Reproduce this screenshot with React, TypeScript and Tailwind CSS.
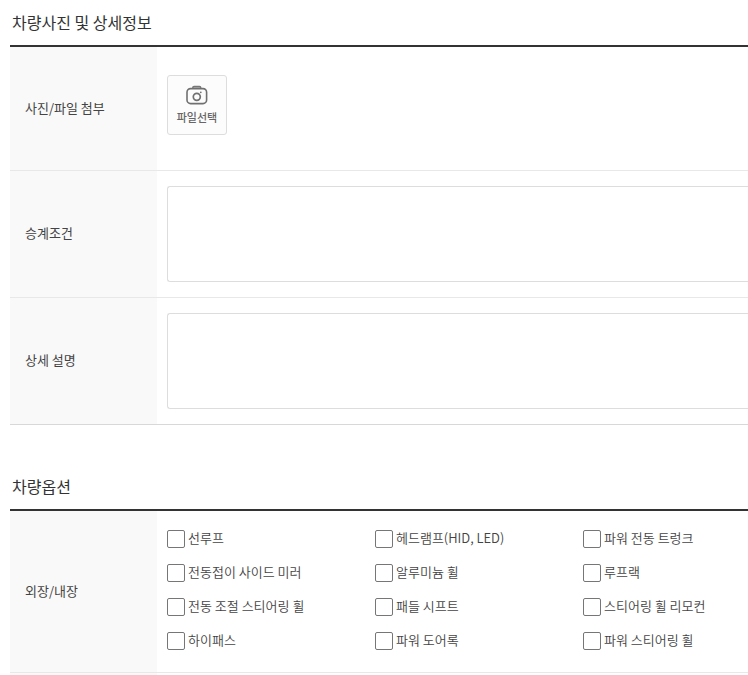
import type { ReactNode } from 'react';

const options = [
    '선루프',
    '헤드램프(HID, LED)',
    '파워 전동 트렁크',
    '전동접이 사이드 미러',
    '알루미늄 휠',
    '루프랙',
    '전동 조절 스티어링 휠',
    '패들 시프트',
    '스티어링 휠 리모컨',
    '하이패스',
    '파워 도어록',
    '파워 스티어링 휠',
];

function CameraIcon() {
    return (
        <svg width="22" height="20" viewBox="0 0 22 20" fill="none" aria-hidden="true">
            <path d="M6.8 3.4V2.6c0-.8.5-1.3 1.3-1.3h5.4c.8 0 1.3.5 1.3 1.3v.8z" fill="#bbb" stroke="#777" strokeWidth="1.3" />
            <rect x="1" y="3.6" width="19.6" height="15" rx="3.6" fill="#fcfcfc" stroke="#707070" strokeWidth="1.6" />
            <circle cx="10.8" cy="11.8" r="3.5" stroke="#707070" strokeWidth="1.7" />
            <circle cx="14.8" cy="7.3" r="0.9" fill="#707070" />
        </svg>
    );
}

function SectionTitle({ children }: { children: ReactNode }) {
    return (
        <h2 className="flex h-[47px] items-center border-b-2 border-[#333] pb-[2px] pl-[2px] text-base font-normal text-[#333]">
            {children}
        </h2>
    );
}

function Row({ label, children }: { label: ReactNode; children: ReactNode }) {
    return (
        <div className="flex border-b border-[#e8e8e8] last:border-[#d8d8d8]">
            <div className="flex w-[147px] shrink-0 items-center bg-[#f9f9f9] pb-[2px] pl-[15px] text-[#444]">{label}</div>
            <div className="min-w-0 flex-1 pl-[10px]">{children}</div>
        </div>
    );
}

export default function App() {
    return (
        <form className="overflow-hidden bg-white pl-[10px] font-['Noto_Sans_CJK_KR',sans-serif] text-[13px]">
            <section>
                <SectionTitle>차량사진 및 상세정보</SectionTitle>
                <div>
                    <Row label={<span id="photo-label">사진/파일 첨부</span>}>
                        <div className="pt-7 pb-[35px]">
                            <button
                                type="button"
                                aria-describedby="photo-label"
                                className="flex h-[60px] w-[60px] flex-col items-center rounded-[3px] border border-[#ddd] bg-[#fcfcfc] pt-[9px] text-[11px] leading-6 font-medium text-[#666]"
                            >
                                <CameraIcon />
                                파일선택
                            </button>
                        </div>
                    </Row>
                    <Row label={<label htmlFor="terms">승계조건</label>}>
                        <div className="py-[15px]">
                            <textarea id="terms" className="block h-24 w-full resize-none rounded-l-[3px] border border-r-0 border-[#ddd] bg-white p-2 outline-none" />
                        </div>
                    </Row>
                    <Row label={<label htmlFor="detail">상세 설명</label>}>
                        <div className="py-[15px]">
                            <textarea id="detail" className="block h-24 w-full resize-none rounded-l-[3px] border border-r-0 border-[#ddd] bg-white p-2 outline-none" />
                        </div>
                    </Row>
                </div>
            </section>

            <section className="mt-[39px]">
                <SectionTitle>차량옵션</SectionTitle>
                <div>
                    <Row label={<span id="option-label">외장/내장</span>}>
                        <div role="group" aria-labelledby="option-label" className="grid grid-cols-[208px_208px_1fr] pt-[11px] pb-[14px]">
                            {options.map((option) => (
                                <label key={option} className="flex h-[34px] items-center gap-[3px] font-[350] text-[#444]">
                                    <input
                                        type="checkbox"
                                        className="h-[18px] w-[18px] shrink-0 appearance-none rounded-[2px] border border-[#767676] bg-white checked:bg-[#333]"
                                    />
                                    <span className="pb-[2px]">{option}</span>
                                </label>
                            ))}
                        </div>
                    </Row>
                    <div className="h-[2px] w-[147px] bg-[#f9f9f9]" />
                </div>
            </section>
        </form>
    );
}
